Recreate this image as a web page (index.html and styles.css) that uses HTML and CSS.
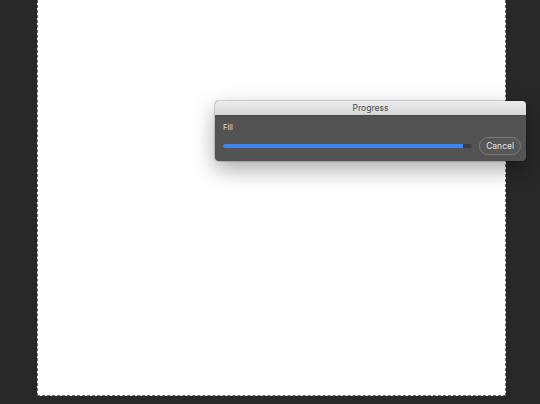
FILE: index.html
```html
<!DOCTYPE html>
<html lang="en">

<head>
    <meta charset="UTF-8">
    <title>Progress</title>
    <link rel="stylesheet" href="styles.css">
</head>

<body>
    <main class="workspace">
        <section class="canvas"></section>
    </main>

    <section class="dialog">
        <header class="dialog-title">Progress</header>
        <div class="dialog-body">
            <div class="dialog-label">Fill</div>
            <div class="dialog-row">
                <div class="progress">
                    <div class="progress-fill" style="width: 96.5%"></div>
                </div>
                <button class="cancel">Cancel</button>
            </div>
        </div>
    </section>
</body>

</html>
```

FILE: styles.css
```css
body {
    margin: 0;
    background-color: #282828;
    font-family: "Inter", "Liberation Sans", sans-serif;
    width: 540px;
    height: 404px;
    overflow: hidden;
}

.workspace {
    padding-left: 37px;
}

.canvas {
    width: 467px;
    height: 395px;
    background-color: white;
    border: 1px dashed #6a6a6a;
    border-top: none;
}

.dialog {
    position: absolute;
    left: 215px;
    top: 101px;
    width: 311px;
    border-radius: 4px;
    overflow: hidden;
    background-color: #535353;
    box-shadow: 0 8px 22px rgba(0, 0, 0, .35), 0 0 0 1px rgba(0, 0, 0, .15);
}

.dialog-title {
    height: 14px;
    line-height: 14px;
    text-align: center;
    font-size: 8.5px;
    color: #4a4a4a;
    background: linear-gradient(#ececec, #d6d6d6);
    border-bottom: 1px solid #4a4a4a;
}

.dialog-body {
    padding: 6px 6px 6px 8px;
}

.dialog-label {
    font-size: 7.5px;
    color: #dedede;
    height: 12px;
    line-height: 12px;
}

.dialog-row {
    display: flex;
    align-items: center;
    gap: 7px;
    margin-top: 3px;
}

.progress {
    flex: 1;
    height: 4px;
    border-radius: 2px;
    background-color: #3e3e3e;
    overflow: hidden;
}

.progress-fill {
    height: 100%;
    background-color: #3d85f2;
}

.cancel {
    font-family: inherit;
    font-size: 8.5px;
    color: #e4e4e4;
    background-color: #575757;
    border: 1px solid #7a7a7a;
    border-radius: 9px;
    height: 18px;
    padding: 0 6px;
    margin-right: -1px;
}
```
